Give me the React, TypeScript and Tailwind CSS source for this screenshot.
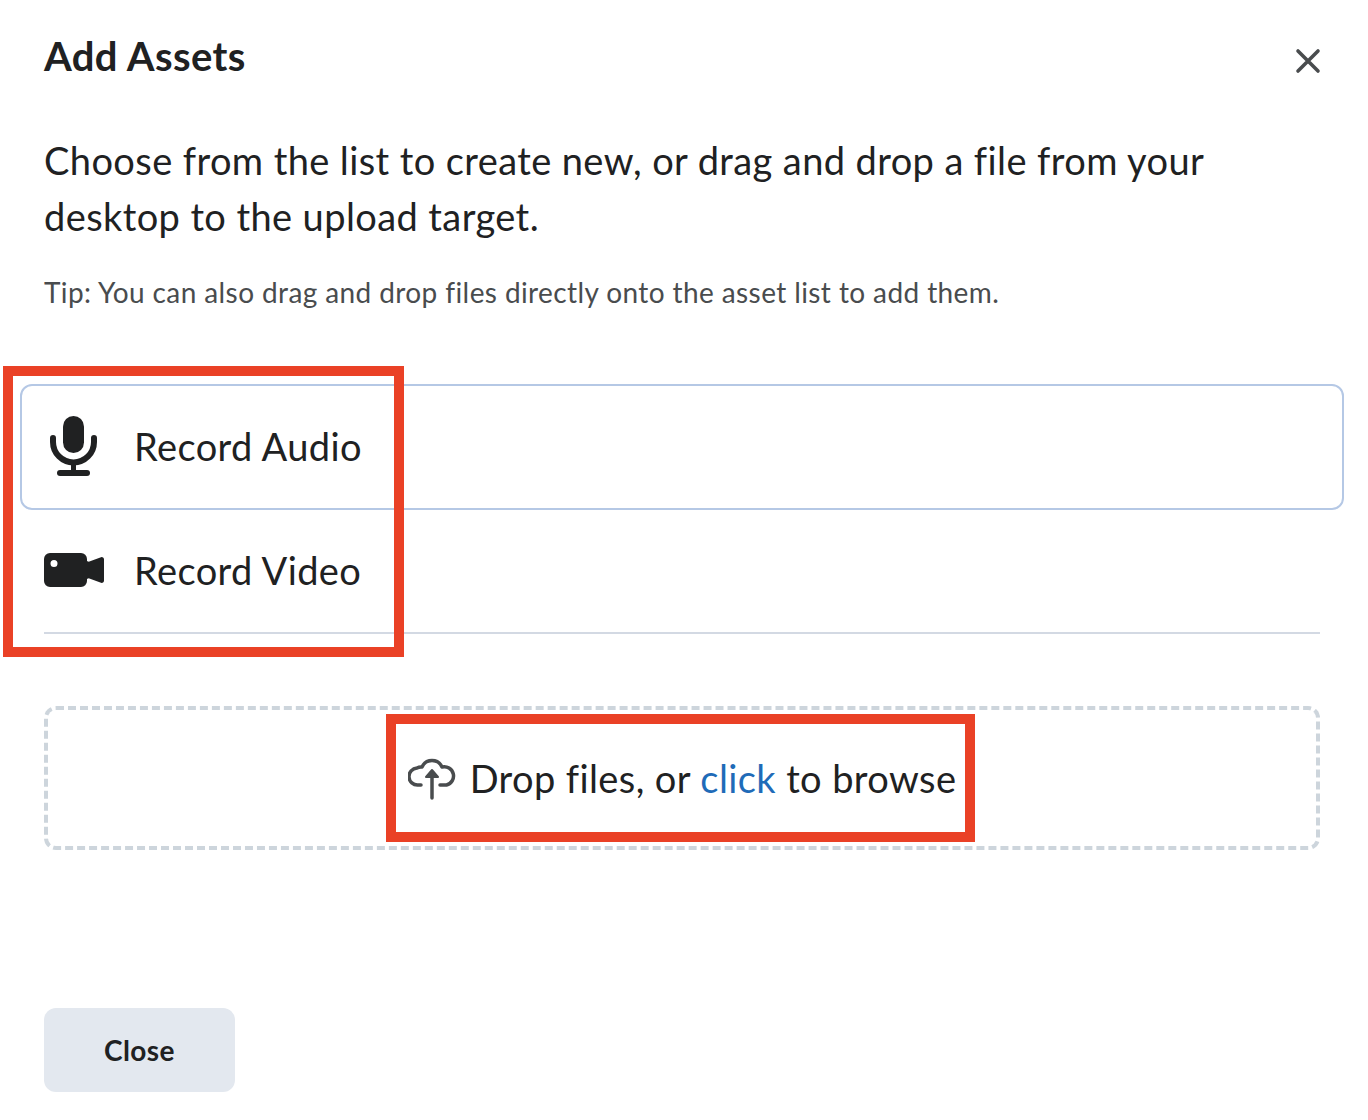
export default function App() {
  return (
    <div className="relative w-[1368px] h-[1120px] bg-white overflow-hidden text-[#202122] font-['Lato',sans-serif] tracking-[0.4px] [font-variant-ligatures:none]">
      <div className="flex flex-col">
        <div className="flex items-start justify-between pl-[44px] pr-[46px] pt-[31px] h-[132px]">
          <h1 className="text-[40px] font-bold leading-[50px]">Add Assets</h1>
          <svg className="mt-[16px]" width="28" height="28" viewBox="0 0 28 28" fill="none" stroke="#494c4e" strokeWidth="3.6" strokeLinecap="round">
            <path d="M4 4 L24 24 M24 4 L4 24" />
          </svg>
        </div>
        <p className="px-[44px] text-[38px] leading-[56px] h-[112px] whitespace-pre-line">{"Choose from the list to create new, or drag and drop a file from your\ndesktop to the upload target."}</p>
        <p className="px-[44px] mt-[30px] text-[28px] leading-[36px] text-[#494c4e]">Tip: You can also drag and drop files directly onto the asset list to add them.</p>
        <div className="mt-[74px] mr-[24px] ml-[20px] h-[126px] pb-[2px] border-2 border-[#b5c8e5] rounded-[12px] flex items-center pl-[28px] gap-[36px]">
          <MicIcon />
          <span className="text-[38px] leading-[48px]">Record Audio</span>
        </div>
        <div className="ml-[44px] mr-[48px] h-[124px] pb-[2px] border-b-2 border-[#d3d9e3] flex items-center gap-[30px]">
          <VideoIcon />
          <span className="text-[38px] leading-[48px]">Record Video</span>
        </div>
        <div className="mt-[72px] mr-[48px] ml-[44px] h-[144px] border-[4px] border-dashed border-[#cdd5dc] rounded-[12px] flex items-center justify-center gap-[14px]">
          <CloudIcon />
          <span className="text-[38px] leading-[48px]">
            Drop files, or <span className="text-[#1f6bb8]">click</span> to browse
          </span>
        </div>
        <button className="mt-[158px] ml-[44px] w-[191px] h-[84px] rounded-[12px] bg-[#e3e8ef] text-[28px] font-bold text-center">Close</button>
      </div>
      <div className="absolute left-[3px] top-[366px] w-[401px] h-[291px] border-[10px] border-[#ea4126]" />
      <div className="absolute left-[386px] top-[714px] w-[589px] h-[128px] border-[10px] border-[#ea4126]" />
    </div>
  );
}

function MicIcon() {
  return (
    <svg width="48" height="60" viewBox="0 0 48 60" fill="none">
      <rect x="13" y="0" width="21" height="37" rx="10.5" fill="#202122" />
      <path d="M3 22 V26 A20.5 20.5 0 0 0 44 26 V22" stroke="#202122" strokeWidth="6" strokeLinecap="round" />
      <path d="M23.5 46 V56" stroke="#202122" strokeWidth="5" />
      <path d="M10 57 H37" stroke="#202122" strokeWidth="6" strokeLinecap="round" />
    </svg>
  );
}

function VideoIcon() {
  return (
    <svg width="60" height="34" viewBox="0 0 60 34" fill="none">
      <path fillRule="evenodd" clipRule="evenodd" d="M6 0 H37 A6 6 0 0 1 43 6 V8 L45 9 V25 L43 26 V28 A6 6 0 0 1 37 34 H6 A6 6 0 0 1 0 28 V6 A6 6 0 0 1 6 0 Z M10 7 A3.5 3.5 0 1 0 10 14 A3.5 3.5 0 1 0 10 7 Z" fill="#202122" />
      <path d="M44 9 L57 4.2 A2.3 2.3 0 0 1 60 6.5 V27.5 A2.3 2.3 0 0 1 57 29.8 L44 25 Z" fill="#202122" />
    </svg>
  );
}

function CloudIcon() {
  return (
    <svg width="48" height="44" viewBox="0 0 48 44" fill="none" stroke="#494c4e" strokeWidth="3.5" strokeLinecap="round" strokeLinejoin="round">
      <path d="M13 29 H10 A8.2 8.2 0 0 1 9 12 A8 8 0 0 1 14 11 A11 11 0 0 1 34 11 A8.2 8.2 0 1 1 38.5 29 H32" />
      <path d="M24 42 V18" />
      <path d="M18 21 L24 14 L30 21 Z" fill="#494c4e" strokeWidth="2" />
    </svg>
  );
}
